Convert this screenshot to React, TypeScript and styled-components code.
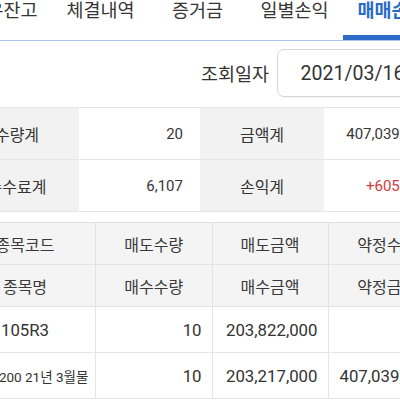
import React from "react";
import styled, { createGlobalStyle } from "styled-components";

const GlobalStyle = createGlobalStyle`
  html, body {
    margin: 0;
    padding: 0;
    background: #ffffff;
    overflow: hidden;
  }
  body {
    font-family: Roboto, "Noto Sans CJK KR", "Noto Sans", sans-serif;
    color: #333333;
  }
  * { box-sizing: border-box; }
`;

const Page = styled.div`
  width: 490px;
  margin-left: -45px;
`;

const TabBar = styled.nav`
  display: grid;
  grid-template-columns: repeat(5, 97px);
  height: 41px;
  border-bottom: 1px solid #a9c6ea;
`;

const Tab = styled.div<{ $active?: boolean }>`
  display: flex;
  justify-content: center;
  align-items: flex-start;
  height: 40px;
  font-size: 18.5px;
  line-height: 23px;
  white-space: nowrap;
  color: ${(p) => (p.$active ? "#2a6bc8" : "#363636")};
  font-weight: ${(p) => (p.$active ? 700 : 400)};
  border-bottom: 5px solid ${(p) => (p.$active ? "#2f6cc7" : "transparent")};
`;

const DateRow = styled.div`
  display: flex;
  justify-content: flex-end;
  align-items: center;
  gap: 8px;
  padding: 8px 17px 10px 0;
`;

const DateLabel = styled.span`
  font-size: 18.5px;
  color: #333333;
`;

const DateBox = styled.div`
  width: 151px;
  height: 48px;
  border: 1px solid #d6d6d6;
  border-radius: 7px;
  display: flex;
  align-items: center;
  justify-content: center;
  font-size: 19.5px;
  color: #333333;
  box-shadow: 0 1px 1px rgba(0, 0, 0, 0.04);
`;

const Summary = styled.div`
  display: grid;
  grid-template-columns: 124px 121px 124px 1fr;
  border-top: 1px solid #e6e6e6;
`;

const SumCell = styled.div<{ $label?: boolean; $red?: boolean }>`
  height: 52px;
  display: flex;
  align-items: center;
  justify-content: ${(p) => (p.$label ? "center" : "flex-end")};
  padding: 0 17px;
  font-size: ${(p) => (p.$label ? "16px" : "15px")};
  background: ${(p) => (p.$label ? "#f2f2f2" : "#ffffff")};
  color: ${(p) => (p.$red ? "#d23b3b" : "#363636")};
  border-bottom: 1px solid #e6e6e6;
`;

const Grid = styled.div`
  margin-top: 10px;
  display: grid;
  grid-template-columns: 141px 116.5px 116px 1fr;
  border-top: 1px solid #dedede;
`;

const HeadCell = styled.div<{ $last?: boolean }>`
  height: 42px;
  display: flex;
  align-items: center;
  justify-content: center;
  font-size: 16px;
  color: #3a3a3a;
  background: #f4f4f4;
  border-bottom: 1px solid #e3e3e3;
  border-right: ${(p) => (p.$last ? "none" : "1px solid #e3e3e3")};
  white-space: nowrap;
`;

const DataCell = styled.div<{ $align?: "center" | "right"; $small?: boolean; $last?: boolean }>`
  height: 46px;
  display: flex;
  align-items: center;
  justify-content: ${(p) => (p.$align === "center" ? "center" : "flex-end")};
  padding: ${(p) => (p.$last ? "0 14px 0 10px" : "0 10px")};
  font-size: ${(p) => (p.$small ? "13.5px" : "16.8px")};
  color: #333333;
  background: #ffffff;
  border-bottom: 1px solid #e6e6e6;
  border-right: ${(p) => (p.$last ? "none" : "1px solid #e6e6e6")};
  white-space: nowrap;
`;

const tabs = ["보유잔고", "체결내역", "증거금", "일별손익", "매매손익"];

export default function App() {
  return (
    <>
      <GlobalStyle />
      <Page>
        <TabBar>
          {tabs.map((t, i) => (
            <Tab key={t} $active={i === 4}>
              {t}
            </Tab>
          ))}
        </TabBar>
        <DateRow>
          <DateLabel>조회일자</DateLabel>
          <DateBox>2021/03/16</DateBox>
        </DateRow>
        <Summary>
          <SumCell $label>수량계</SumCell>
          <SumCell>20</SumCell>
          <SumCell $label>금액계</SumCell>
          <SumCell>407,039,000</SumCell>
          <SumCell $label>수수료계</SumCell>
          <SumCell>6,107</SumCell>
          <SumCell $label>손익계</SumCell>
          <SumCell $red>+605,000</SumCell>
        </Summary>
        <Grid>
          <HeadCell>종목코드</HeadCell>
          <HeadCell>매도수량</HeadCell>
          <HeadCell>매도금액</HeadCell>
          <HeadCell $last>약정수량</HeadCell>
          <HeadCell>종목명</HeadCell>
          <HeadCell>매수수량</HeadCell>
          <HeadCell>매수금액</HeadCell>
          <HeadCell $last>약정금액</HeadCell>
          <DataCell $align="center">105R3</DataCell>
          <DataCell>10</DataCell>
          <DataCell>203,822,000</DataCell>
          <DataCell $last>20</DataCell>
          <DataCell $align="center" $small>코스피200 21년 3월물</DataCell>
          <DataCell>10</DataCell>
          <DataCell>203,217,000</DataCell>
          <DataCell $last>407,039,000</DataCell>
        </Grid>
      </Page>
    </>
  );
}
